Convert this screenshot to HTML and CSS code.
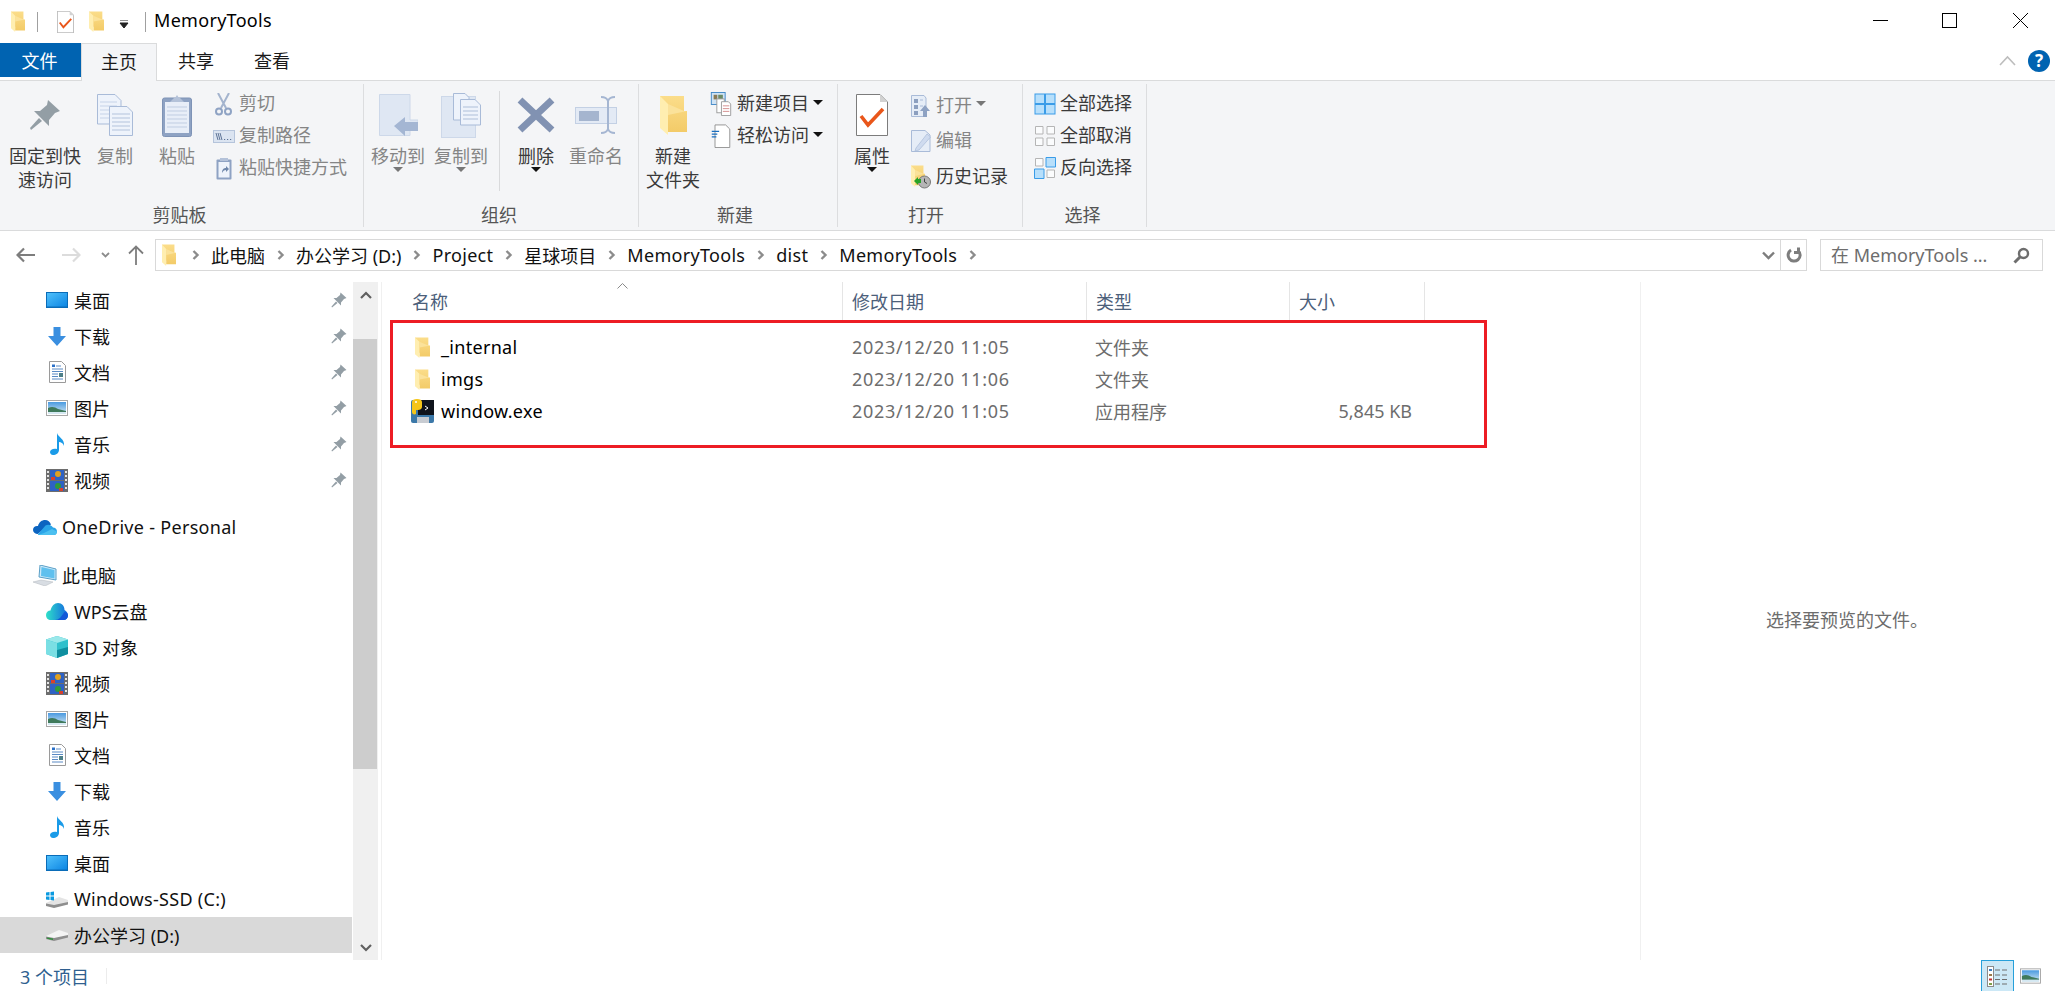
FILE: index.html
```html
<!DOCTYPE html>
<html lang="zh-CN">
<head>
    <meta charset="UTF-8">
    <title>MemoryTools</title>
    <link rel="stylesheet" href="styles.css">
</head>
<body>
    <!-- icon sprite -->
    <svg class="sprite" xmlns="http://www.w3.org/2000/svg">
        <defs>
            <linearGradient id="gFolder" x1="0" y1="0" x2="0" y2="1"><stop offset="0" stop-color="#fbdd8a"/><stop offset="1" stop-color="#f3cb68"/></linearGradient>
            <linearGradient id="gDesk" x1="0" y1="0" x2="1" y2="1"><stop offset="0" stop-color="#4fc0fb"/><stop offset="1" stop-color="#0d86e3"/></linearGradient>
            <linearGradient id="gSky" x1="0" y1="0" x2="0" y2="1"><stop offset="0" stop-color="#4a9ae0"/><stop offset="1" stop-color="#d5e8f2"/></linearGradient>
            <linearGradient id="gWps" x1="0" y1="0" x2="1" y2="0"><stop offset="0" stop-color="#2fe0c8"/><stop offset="1" stop-color="#1266e0"/></linearGradient>
        </defs>
        <symbol id="folder" viewBox="0 0 27 40" preserveAspectRatio="none">
            <path d="M0 1H24V16H27V37H8V30H0Z" fill="url(#gFolder)"/>
            <path d="M0 1L8 9V40L0 33Z" fill="#ffeeb0"/>
            <path d="M8 9L24 16H27L8 20Z" fill="#fbe29a"/>
        </symbol>
        <symbol id="pin" viewBox="0 0 32 32">
            <path d="M19 1L31 12L26 14L20 21L20 27L5 12L11 12L18 6Z" fill="#939ea5"/>
            <path d="M10 19L1 29L2 31L13 22Z" fill="#939ea5"/>
        </symbol>
        <symbol id="copy" viewBox="0 0 36 42">
            <path d="M.5.5H18L24 6.5V30H.5Z" fill="#eef3fb" stroke="#a9bbd8"/>
            <path d="M3 8H20M3 12H20M3 16H20M3 20H20M3 24H20" stroke="#c6d3e8"/>
            <path d="M12.5 12.5H30L35.5 18V41.5H12.5Z" fill="#eef3fb" stroke="#a9bbd8"/>
            <path d="M15 20H33M15 24H33M15 28H33M15 32H33M15 36H33" stroke="#b3c3dc"/>
        </symbol>
        <symbol id="paste" viewBox="0 0 30 43">
            <rect x=".5" y="4" width="29" height="38.5" rx="2" fill="#8ea2c3" stroke="#7e93b6"/>
            <rect x="3" y="8" width="24" height="31" fill="#e8eef8"/>
            <path d="M5 13H25M5 17H25M5 21H25M5 25H25M5 29H25M5 33H25" stroke="#c0cde2"/>
            <path d="M8 8L12 4H13L15 1L17 4H18L22 8Z" fill="#b4c2d9"/>
        </symbol>
        <symbol id="cut" viewBox="0 0 17 23">
            <path d="M3 0L11 15M14 0L6 15" stroke="#a4b4ce" stroke-width="2" fill="none"/>
            <circle cx="4" cy="18.5" r="3" fill="none" stroke="#8fa3c4" stroke-width="2"/>
            <circle cx="13" cy="18.5" r="3" fill="none" stroke="#8fa3c4" stroke-width="2"/>
        </symbol>
        <symbol id="copypath" viewBox="0 0 22 13">
            <rect x=".5" y=".5" width="21" height="12" fill="#dbe4f1" stroke="#b5c4db"/>
            <path d="M3 3L5 10M5 3L7 10M7 3L9 10M11 9.5H12.2M14 9.5H15.2M17 9.5H18.2" stroke="#5d7396" fill="none"/>
        </symbol>
        <symbol id="shortcut" viewBox="0 0 16 23">
            <rect x=".5" y="2.5" width="15" height="20" rx="1" fill="#8ea2c3"/>
            <rect x="2.5" y="5" width="11" height="15.5" fill="#eef3fb"/>
            <path d="M4 1H12V4H4Z" fill="#b4c2d9"/>
            <path d="M6 16C6 12 8 11 10 11V9L13 12L10 15V13C8 13 7 14 6 16Z" fill="#6e86aa"/>
        </symbol>
        <symbol id="move" viewBox="0 0 39 42">
            <path d="M.5.5H31V26H39V36H31V41.5H.5Z" fill="#dfe7f3" stroke="#cdd8e9"/>
            <path d="M15 32L26 23V28H39V37H26V42Z" fill="#a4b6d3"/>
        </symbol>
        <symbol id="copyto" viewBox="0 0 40 45">
            <rect x=".5" y="3.5" width="34" height="41" fill="#dfe7f3" stroke="#cdd8e9"/>
            <path d="M12.5.5H24L28 4.5V27H12.5Z" fill="#eef3fb" stroke="#a9bbd8"/>
            <path d="M19.5 6.5H34L39.5 12V32H19.5Z" fill="#eef3fb" stroke="#a9bbd8"/>
            <path d="M22 14H37M22 18H37M22 22H37M22 26H37" stroke="#aebfd9"/>
        </symbol>
        <symbol id="del" viewBox="0 0 38 36">
            <path d="M3 3L35 33M35 3L3 33" stroke="#8192b2" stroke-width="7"/>
        </symbol>
        <symbol id="rename" viewBox="0 0 42 38">
            <rect x=".5" y="11.5" width="41" height="16" fill="#e3eaf5" stroke="#c3d0e4"/>
            <rect x="4" y="15" width="20" height="10" fill="#a5b5cf"/>
            <path d="M26 1C30 1 32 2 33 5V33C32 36 30 37 26 37M40 1C36 1 34 2 33 5M33 33C34 36 36 37 40 37" stroke="#a5b6d2" stroke-width="2" fill="none"/>
        </symbol>
        <symbol id="newitem" viewBox="0 0 22 26">
            <rect x=".5" y=".5" width="15" height="13" fill="#cfe3f5" stroke="#3e86c6"/>
            <rect x="3" y="3" width="4" height="5" fill="#8a7a55"/>
            <rect x="8" y="3" width="5" height="5" fill="#6c8a66"/>
            <rect x="6.5" y="7.5" width="8" height="15" fill="#fff" stroke="#9a9a9a"/>
            <path d="M11.5 10.5H19L21.5 13V25.5H11.5Z" fill="#fff" stroke="#9a9a9a"/>
            <path d="M13 15H20M13 18H20M13 21H20" stroke="#d38a8a"/>
        </symbol>
        <symbol id="easy" viewBox="0 0 20 26">
            <path d="M3.5 1H15L19.5 5.5V25.5H3.5Z" fill="#fff" stroke="#8f8f8f"/>
            <path d="M0 8H8M0 11H6M0 14H5" stroke="#1a6fc0" stroke-width="1.4"/>
        </symbol>
        <symbol id="props" viewBox="0 0 32 42">
            <path d="M.5.5H24L31.5 8V41.5H.5Z" fill="#fff" stroke="#7c7c7c"/>
            <path d="M24 .5V8H31.5Z" fill="#d2d2d2"/>
            <path d="M5 22L12 31L27 15" fill="none" stroke="#e9561a" stroke-width="3.6"/>
        </symbol>
        <symbol id="open" viewBox="0 0 19 22">
            <path d="M.5.5H13L15 3V21.5H.5Z" fill="#e6edf7" stroke="#a9bbd8"/>
            <path d="M3 4H7V8H3ZM3 10H7V14H3ZM3 16H7V20H3Z" fill="#8c9fbf"/>
            <path d="M9 5H12M9 11H12" stroke="#a9bbd8"/>
            <path d="M14 10L19 16H16V22H12V16H9Z" fill="#8ea2c3"/>
        </symbol>
        <symbol id="edit" viewBox="0 0 20 22">
            <path d="M.5.5H14L19 5V21.5H.5Z" fill="#e6edf7" stroke="#a9bbd8"/>
            <path d="M5 18L16 4L19.5 7L8 20L4 21Z" fill="#cfdbef" stroke="#a9bbd8" stroke-width=".7"/>
        </symbol>
        <symbol id="history" viewBox="0 0 20 24">
            <use href="#folder" width="14" height="22"/>
            <circle cx="13.5" cy="17" r="6" fill="#b5b5b5" stroke="#777"/>
            <path d="M13.5 13.5V17L16 18.5" stroke="#444" fill="none"/>
            <path d="M3 16L7 12V14H10V18H7V20Z" fill="#27a327"/>
        </symbol>
        <symbol id="selall" viewBox="0 0 22 22">
            <rect x=".5" y=".5" width="21" height="21" fill="#3a9ce8"/>
            <path d="M1.5 1.5H10V10H1.5ZM12 1.5H20.5V10H12ZM1.5 12H10V20.5H1.5ZM12 12H20.5V20.5H12Z" fill="#b7dffb"/>
        </symbol>
        <symbol id="selnone" viewBox="0 0 22 22">
            <path d="M1.5 1.5H9V9H1.5ZM13 1.5H20.5V9H13ZM1.5 13H9V20.5H1.5ZM13 13H20.5V20.5H13Z" fill="#fbfcfd" stroke="#b5b5b5"/>
        </symbol>
        <symbol id="selinv" viewBox="0 0 22 22">
            <path d="M1.5 1.5H9V9H1.5ZM13 13H20.5V20.5H13Z" fill="#fbfcfd" stroke="#b5b5b5"/>
            <path d="M12 .5H21.5V10H12ZM.5 12H10V21.5H.5Z" fill="#b7dffb" stroke="#3a9ce8"/>
        </symbol>
        <symbol id="desktop" viewBox="0 0 22 16">
            <rect width="22" height="16" fill="#0a6cb8"/>
            <rect x="1" y="1" width="20" height="13.5" fill="url(#gDesk)"/>
        </symbol>
        <symbol id="download" viewBox="0 0 18 19">
            <path d="M5.500 0H12.500V9H18L9 19L0 9H5.500Z" fill="#3a8fe0"/>
        </symbol>
        <symbol id="doc" viewBox="0 0 17 22">
            <path d="M.5.5H12.5L16.5 4.5V21.5H.5Z" fill="#fff" stroke="#9a9a9a"/>
            <path d="M3 3.5H6V6H3Z" fill="#2a70c8"/>
            <path d="M7 5H12M3 8H14M3 10.5H14M3 13H9M3 15.5H9M3 18H14" stroke="#5a8ac4"/>
            <rect x="10" y="12" width="4" height="4" fill="#4d7f88"/>
        </symbol>
        <symbol id="picture" viewBox="0 0 22 16">
            <rect x=".5" y=".5" width="21" height="15" fill="#fff" stroke="#a8a8a8"/>
            <rect x="2" y="2" width="18" height="12" fill="url(#gSky)"/>
            <path d="M2 8C6 6 9 7 12 9L20 11V12H2Z" fill="#3f7a5c"/>
            <path d="M2 12H20V14H2Z" fill="#d5e8f2"/>
        </symbol>
        <symbol id="music" viewBox="0 0 15 22">
            <path d="M7 0C8 4 15 6 14 13C13 10 11 9 9 9V17C9 20 6 22 3 22C1 22 0 20.500 0 19C0 16.500 3.500 15 7 16Z" fill="#1a9be8"/>
        </symbol>
        <symbol id="video" viewBox="0 0 22 23">
            <rect width="22" height="23" fill="#6d6d6d"/>
            <path d="M1 2H3V4H1ZM1 6H3V8H1ZM1 10H3V12H1ZM1 14H3V16H1ZM1 18H3V20H1ZM19 2H21V4H19ZM19 6H21V8H19ZM19 10H21V12H19ZM19 14H21V16H19ZM19 18H21V20H19Z" fill="#e6e6e6"/>
            <rect x="4" y="1" width="14" height="10" fill="#2e62c4"/>
            <rect x="4" y="12" width="14" height="10" fill="#2e62c4"/>
            <circle cx="12" cy="5" r="3" fill="#e0a020"/>
            <circle cx="12" cy="17" r="3" fill="#2f9a3c"/>
            <path d="M5 8H9V11H5ZM13 19H17V22H13Z" fill="#d8402c"/>
        </symbol>
        <symbol id="onedrive" viewBox="0 0 24 16">
            <path d="M5 15C2 15 0 13 0 11C0 8 2.500 6.500 5 7C6 3 9 1 12 1C15 1 17 3 18 5.500L12 9L6 14Z" fill="#0c64c0"/>
            <path d="M5 16H21C23 16 24 14 24 12.500C24 10 22 8.500 20 8.500C18 5.500 15 5 12.500 6.500L7 13C6 14 5 15 5 16Z" fill="#2ba5e8"/>
            <path d="M5 16H21C22.500 16 24 15 24 12.500L19 10L11 14Z" fill="#4cc0f0"/>
        </symbol>
        <symbol id="pc" viewBox="0 0 24 21">
            <path d="M7 0L23 4V15L6 12Z" fill="#cdeafa" stroke="#5a9fc6"/>
            <path d="M8.500 2L21.500 5V13.500L8 11Z" fill="#5fc0ee"/>
            <path d="M0 17L8 15L20 17L12 21Z" fill="#d8dde3" stroke="#b0b6bd" stroke-width=".5"/>
        </symbol>
        <symbol id="wps" viewBox="0 0 22 17">
            <path d="M5 17C2 17 0 15 0 12C0 9.500 2 7.500 4.500 7.500C5.500 3 8.500 0 12 0C16 0 18.500 3 18.500 7C20.500 8 22 10 22 12.500C22 15 20 17 17.500 17Z" fill="url(#gWps)"/>
            <path d="M9 17C13 17 15 14 18.500 9C20.500 9 22 10.500 22 12.500C22 15 20 17 17.500 17Z" fill="#1258d8"/>
        </symbol>
        <symbol id="cube" viewBox="0 0 22 22">
            <path d="M11 0L22 3.500V18L11 22L0 18V3.500Z" fill="#2fc0cc"/>
            <path d="M11 0L22 3.500L11 7L0 3.500Z" fill="#9ae8ea"/>
            <path d="M0 3.500L11 7V22L0 18Z" fill="#7adfe4"/>
            <path d="M11 14L22 11V18L11 22Z" fill="#0f8fa0"/>
        </symbol>
        <symbol id="drive" viewBox="0 0 22 11">
            <path d="M0 6L13 0L22 3V6L8 9L0 7Z" fill="#f4f4f4"/>
            <path d="M0 6.500L8 8L22 5V7.500L8 11L0 9Z" fill="#8e8e8e"/>
            <path d="M1 7.500L7 8.500V10L1 8.800Z" fill="#2f8f3c"/>
        </symbol>
        <symbol id="drivewin" viewBox="0 0 22 17">
            <path d="M0 12L13 6L22 9V12L8 15L0 13Z" fill="#e4e4e4"/>
            <path d="M0 12.500L8 14L22 11V13.500L8 17L0 15Z" fill="#8e8e8e"/>
            <path d="M0 1.500L3.500 1V4.500H0ZM4.500 1L8 .5V4.500H4.500ZM0 5.500H3.500V9L0 8.500ZM4.500 5.500H8V9.500L4.500 9Z" fill="#0a9ae0"/>
        </symbol>
        <symbol id="exe" viewBox="0 0 23 24">
            <rect y="1" width="23" height="23" rx="2" fill="#3b78a8"/>
            <rect x="7" y="1" width="16" height="15" fill="#10141c"/>
            <path d="M1 3C1 1 3 0 6 0C9 0 11 1 11 3V8C11 10 9 11 7 11H5V15C3 16 1 15 1 13Z" fill="#f5c518"/>
            <circle cx="5" cy="3" r="1" fill="#fff"/>
            <path d="M14 7L17 9L14 11" stroke="#fff" fill="none"/>
            <rect x="6" y="18" width="12" height="6" fill="#c8ccd2"/>
        </symbol>
        <symbol id="chev" viewBox="0 0 8 10">
            <path d="M1.500 1L5.500 5L1.500 9" stroke="#8c8c8c" stroke-width="2.400" fill="none"/>
        </symbol>
    </svg>

    <div class="titlebar">
        <svg class="qa-folder" width="14" height="21"><use href="#folder"/></svg>
        <span class="qa-sep"></span>
        <svg class="qa-props" width="17" height="22"><use href="#props"/></svg>
        <svg class="qa-folder2" width="15" height="21"><use href="#folder"/></svg>
        <svg class="qa-more" width="10" height="9" viewBox="0 0 10 9"><path d="M1 0H9M1 3H9L5 8Z" stroke="#222" fill="#222" stroke-width="1"/></svg>
        <span class="qa-sep qa-sep-last"></span>
        <span class="title lat">MemoryTools</span>
        <div class="winbtns">
            <svg class="win-min" width="15" height="15" viewBox="0 0 15 15"><path d="M0 7.500H15" stroke="#000"/></svg>
            <svg class="win-max" width="15" height="15" viewBox="0 0 15 15"><rect x=".5" y=".5" width="14" height="14" fill="none" stroke="#000"/></svg>
            <svg class="win-close" width="15" height="15" viewBox="0 0 15 15"><path d="M0 0L15 15M15 0L0 15" stroke="#000"/></svg>
        </div>
    </div>

    <div class="tabs">
        <div class="tab tab-file">文件</div>
        <div class="tab tab-active">主页</div>
        <div class="tab tab-share">共享</div>
        <div class="tab tab-view">查看</div>
        <svg class="collapse" width="17" height="11" viewBox="0 0 17 11"><path d="M1 10L8.500 2L16 10" stroke="#bdbdbd" stroke-width="1.600" fill="none"/></svg>
        <div class="help">?</div>
    </div>

    <div class="ribbon">
        <div class="group group-clip">
            <div class="tools">
                <div class="big w74">
                    <div class="big-icon"><svg width="32" height="32"><use href="#pin"/></svg></div>
                    <span>固定到快<br>速访问</span>
                </div>
                <div class="big w66 off">
                    <div class="big-icon"><svg width="36" height="42"><use href="#copy"/></svg></div>
                    <span>复制</span>
                </div>
                <div class="big w58 off">
                    <div class="big-icon"><svg width="30" height="43"><use href="#paste"/></svg></div>
                    <span>粘贴</span>
                </div>
                <div class="smalls smalls-clip">
                    <div class="small off"><div class="small-icon"><svg width="17" height="23"><use href="#cut"/></svg></div>剪切</div>
                    <div class="small off"><div class="small-icon"><svg width="22" height="13"><use href="#copypath"/></svg></div>复制路径</div>
                    <div class="small off"><div class="small-icon"><svg width="16" height="23"><use href="#shortcut"/></svg></div>粘贴快捷方式</div>
                </div>
            </div>
            <div class="group-label">剪贴板</div>
        </div>

        <div class="group group-org">
            <div class="tools">
                <div class="big w60 off">
                    <div class="big-icon"><svg width="39" height="42"><use href="#move"/></svg></div>
                    <span>移动到</span><i class="drop"></i>
                </div>
                <div class="big w66 off">
                    <div class="big-icon"><svg width="40" height="45"><use href="#copyto"/></svg></div>
                    <span>复制到</span><i class="drop"></i>
                </div>
                <div class="tool-sep"></div>
                <div class="big w62">
                    <div class="big-icon"><svg width="38" height="36"><use href="#del"/></svg></div>
                    <span>删除</span><i class="drop"></i>
                </div>
                <div class="big w58 off">
                    <div class="big-icon"><svg width="42" height="38"><use href="#rename"/></svg></div>
                    <span>重命名</span>
                </div>
            </div>
            <div class="group-label">组织</div>
        </div>

        <div class="group group-new">
            <div class="tools">
                <div class="big w60">
                    <div class="big-icon"><svg width="27" height="40"><use href="#folder"/></svg></div>
                    <span>新建<br>文件夹</span>
                </div>
                <div class="smalls smalls-new">
                    <div class="small"><div class="small-icon"><svg width="22" height="24"><use href="#newitem"/></svg></div>新建项目<i class="drop drop-side"></i></div>
                    <div class="small"><div class="small-icon"><svg width="20" height="24"><use href="#easy"/></svg></div>轻松访问<i class="drop drop-side"></i></div>
                </div>
            </div>
            <div class="group-label">新建</div>
        </div>

        <div class="group group-open">
            <div class="tools">
                <div class="big w60">
                    <div class="big-icon"><svg width="32" height="42"><use href="#props"/></svg></div>
                    <span>属性</span><i class="drop"></i>
                </div>
                <div class="smalls smalls-open">
                    <div class="small off"><div class="small-icon"><svg width="19" height="22"><use href="#open"/></svg></div>打开<i class="drop drop-side"></i></div>
                    <div class="small off"><div class="small-icon"><svg width="20" height="22"><use href="#edit"/></svg></div>编辑</div>
                    <div class="small"><div class="small-icon"><svg width="20" height="24"><use href="#history"/></svg></div>历史记录</div>
                </div>
            </div>
            <div class="group-label">打开</div>
        </div>

        <div class="group group-sel">
            <div class="tools">
                <div class="smalls smalls-sel">
                    <div class="small"><div class="small-icon"><svg width="22" height="22"><use href="#selall"/></svg></div>全部选择</div>
                    <div class="small"><div class="small-icon"><svg width="22" height="22"><use href="#selnone"/></svg></div>全部取消</div>
                    <div class="small"><div class="small-icon"><svg width="22" height="22"><use href="#selinv"/></svg></div>反向选择</div>
                </div>
            </div>
            <div class="group-label">选择</div>
        </div>
    </div>

    <div class="addressbar">
        <div class="navbtns">
            <svg class="nb-back" width="19" height="16" viewBox="0 0 19 16"><path d="M19 8H2M8 1.500L1.500 8L8 14.500" stroke="#7d7d7d" stroke-width="2.200" fill="none"/></svg>
            <svg class="nb-fwd" width="19" height="16" viewBox="0 0 19 16"><path d="M0 8H17M11 1.500L17.500 8L11 14.500" stroke="#dcdcdc" stroke-width="2.200" fill="none"/></svg>
            <svg class="nb-recent" width="9" height="6" viewBox="0 0 9 6"><path d="M1 1L4.500 4.500L8 1" stroke="#8c8c8c" stroke-width="1.800" fill="none"/></svg>
            <svg class="nb-up" width="16" height="20" viewBox="0 0 16 20"><path d="M8 20V2M1 8.500L8 1.500L15 8.500" stroke="#7d7d7d" stroke-width="1.800" fill="none"/></svg>
        </div>
        <div class="pathbox">
            <svg class="path-folder" width="14" height="22"><use href="#folder"/></svg>
            <svg class="crumb-chev" width="8" height="10"><use href="#chev"/></svg>
            <span>此电脑</span>
            <svg class="crumb-chev" width="8" height="10"><use href="#chev"/></svg>
            <span>办公学习 (D:)</span>
            <svg class="crumb-chev" width="8" height="10"><use href="#chev"/></svg>
            <span class="lat">Project</span>
            <svg class="crumb-chev" width="8" height="10"><use href="#chev"/></svg>
            <span>星球项目</span>
            <svg class="crumb-chev" width="8" height="10"><use href="#chev"/></svg>
            <span class="lat">MemoryTools</span>
            <svg class="crumb-chev" width="8" height="10"><use href="#chev"/></svg>
            <span class="lat">dist</span>
            <svg class="crumb-chev" width="8" height="10"><use href="#chev"/></svg>
            <span class="lat">MemoryTools</span>
            <svg class="crumb-chev" width="8" height="10"><use href="#chev"/></svg>
            <svg class="path-drop" width="13" height="9" viewBox="0 0 13 9"><path d="M1 1.500L6.500 7L12 1.500" stroke="#7d7d7d" stroke-width="2.400" fill="none"/></svg>
            <div class="path-refresh">
                <svg width="16" height="16" viewBox="0 0 16 16"><path d="M5 2.500A6 6 0 1 0 12.500 3.500M12.500 0V5H8" stroke="#7d7d7d" stroke-width="3" fill="none" transform="translate(0 .5)"/></svg>
            </div>
        </div>
        <div class="searchbox">
            <span class="search-text">在 MemoryTools ...</span>
            <svg width="17" height="17" viewBox="0 0 17 17"><circle cx="10.500" cy="6.500" r="4.500" fill="none" stroke="#6e6e6e" stroke-width="2.400"/><path d="M7 10L1.500 15.500" stroke="#6e6e6e" stroke-width="3"/></svg>
        </div>
    </div>

    <div class="content">
        <div class="navpane">
            <div class="navrow"><div class="nav-icon"><svg width="22" height="16"><use href="#desktop"/></svg></div>桌面<svg class="nav-pin" width="16" height="16"><use href="#pin"/></svg></div>
            <div class="navrow"><div class="nav-icon"><svg width="18" height="19"><use href="#download"/></svg></div>下载<svg class="nav-pin" width="16" height="16"><use href="#pin"/></svg></div>
            <div class="navrow"><div class="nav-icon"><svg width="17" height="22"><use href="#doc"/></svg></div>文档<svg class="nav-pin" width="16" height="16"><use href="#pin"/></svg></div>
            <div class="navrow"><div class="nav-icon"><svg width="22" height="16"><use href="#picture"/></svg></div>图片<svg class="nav-pin" width="16" height="16"><use href="#pin"/></svg></div>
            <div class="navrow"><div class="nav-icon"><svg width="17" height="22"><use href="#music"/></svg></div>音乐<svg class="nav-pin" width="16" height="16"><use href="#pin"/></svg></div>
            <div class="navrow"><div class="nav-icon"><svg width="22" height="23"><use href="#video"/></svg></div>视频<svg class="nav-pin" width="16" height="16"><use href="#pin"/></svg></div>

            <div class="navrow top top-onedrive lat"><div class="nav-icon"><svg width="24" height="16"><use href="#onedrive"/></svg></div>OneDrive - Personal</div>
            <div class="navrow top top-pc"><div class="nav-icon"><svg width="24" height="21"><use href="#pc"/></svg></div>此电脑</div>

            <div class="navrow"><div class="nav-icon"><svg width="22" height="17"><use href="#wps"/></svg></div>WPS云盘</div>
            <div class="navrow"><div class="nav-icon"><svg width="22" height="22"><use href="#cube"/></svg></div>3D 对象</div>
            <div class="navrow"><div class="nav-icon"><svg width="22" height="23"><use href="#video"/></svg></div>视频</div>
            <div class="navrow"><div class="nav-icon"><svg width="22" height="16"><use href="#picture"/></svg></div>图片</div>
            <div class="navrow"><div class="nav-icon"><svg width="17" height="22"><use href="#doc"/></svg></div>文档</div>
            <div class="navrow"><div class="nav-icon"><svg width="18" height="19"><use href="#download"/></svg></div>下载</div>
            <div class="navrow"><div class="nav-icon"><svg width="17" height="22"><use href="#music"/></svg></div>音乐</div>
            <div class="navrow"><div class="nav-icon"><svg width="22" height="16"><use href="#desktop"/></svg></div>桌面</div>
            <div class="navrow lat"><div class="nav-icon"><svg width="22" height="17"><use href="#drivewin"/></svg></div>Windows-SSD (C:)</div>
            <div class="navrow selected"><div class="nav-icon"><svg width="22" height="11"><use href="#drive"/></svg></div>办公学习 (D:)</div>
        </div>

        <div class="scrollbar">
            <div class="sb-btn"><svg width="12" height="8" viewBox="0 0 12 8"><path d="M1 7L6 2L11 7" stroke="#606060" stroke-width="2.200" fill="none"/></svg></div>
            <div class="sb-thumb"></div>
            <div class="sb-rest"></div>
            <div class="sb-btn"><svg width="12" height="8" viewBox="0 0 12 8"><path d="M1 1L6 6L11 1" stroke="#606060" stroke-width="2.200" fill="none"/></svg></div>
        </div>

        <div class="filelist">
            <svg class="sort-arrow" width="11" height="6" viewBox="0 0 11 6"><path d="M.5 5.500L5.500 .5L10.500 5.500" stroke="#8a8a8a" fill="none"/></svg>
            <div class="cols header">
                <div class="hcell hcell-name">名称</div>
                <div class="hcell">修改日期</div>
                <div class="hcell">类型</div>
                <div class="hcell">大小</div>
            </div>
            <div class="rows">
                <div class="cols row">
                    <div class="name lat"><div class="file-icon"><svg width="15" height="21"><use href="#folder"/></svg></div>_internal</div>
                    <div class="date">2023/12/20 11:05</div>
                    <div class="type">文件夹</div>
                    <div class="size"></div>
                </div>
                <div class="cols row">
                    <div class="name lat"><div class="file-icon"><svg width="15" height="21"><use href="#folder"/></svg></div>imgs</div>
                    <div class="date">2023/12/20 11:06</div>
                    <div class="type">文件夹</div>
                    <div class="size"></div>
                </div>
                <div class="cols row">
                    <div class="name lat"><div class="file-icon"><svg width="23" height="24"><use href="#exe"/></svg></div>window.exe</div>
                    <div class="date">2023/12/20 11:05</div>
                    <div class="type">应用程序</div>
                    <div class="size">5,845 KB</div>
                </div>
            </div>
            <!-- red box drawn over the screenshot -->
            <div class="highlight"></div>
        </div>

        <div class="preview">选择要预览的文件。</div>
    </div>

    <div class="statusbar">
        <span class="count">3 个项目</span>
        <span class="status-sep"></span>
        <div class="viewbtns">
            <div class="view-details">
                <svg width="21" height="21" viewBox="0 0 21 21">
                    <rect x=".5" y=".5" width="6" height="20" fill="#fff" stroke="#8a8a8a"/>
                    <path d="M2 3H5V5H2Z" fill="#3f7fc0"/><path d="M2 8H5V10H2Z" fill="#9a7a4a"/><path d="M2 12.500H5V14.500H2Z" fill="#c03030"/><path d="M2 17H5V19H2Z" fill="#7f9f4a"/>
                    <path d="M8 4H13M15 4H20M8 9H13M15 9H20M8 13.500H13M15 13.500H20M8 18H13M15 18H20" stroke="#6e6e6e"/>
                </svg>
            </div>
            <svg width="21" height="16"><use href="#picture"/></svg>
        </div>
    </div>
</body>
</html>
```

FILE: styles.css
```css
/* Explorer window */
html, body {
    margin: 0;
    padding: 0;
    background-color: #fff;
}

body {
    width: 2057px;
    height: 991px;
    overflow: hidden;
    font-family: "Noto Sans", "Noto Sans CJK SC", sans-serif;
    font-size: 18px;
    color: #1a1a1a;
}

svg {
    display: block;
    flex: none;
}

.sprite {
    width: 0;
    height: 0;
}

/* latin strings run a bit wider than Noto in the original */
.lat {
    letter-spacing: .3px;
}

/* title bar */
.titlebar {
    height: 43px;
    display: flex;
    align-items: center;
    padding-left: 11px;
}

.qa-sep {
    width: 1px;
    height: 20px;
    background-color: #a0a0a0;
    margin-left: 12px;
}

.qa-props {
    margin-left: 19px;
}

.qa-folder2 {
    margin-left: 15px;
}

.qa-more {
    margin-left: 15px;
    margin-top: 6px;
}

.qa-sep-last {
    margin-left: 16px;
}

.title {
    margin-left: 8px;
    color: #000;
    margin-top: -3px;
}

.winbtns {
    margin-left: auto;
    display: flex;
    padding-right: 29px;
    margin-top: -2px;
}

.win-max {
    margin-left: 54px;
}

.win-close {
    margin-left: 56px;
}

/* tabs */
.tabs {
    height: 37px;
    display: flex;
    align-items: flex-start;
    position: relative;
    z-index: 1;
}

.tab {
    height: 34px;
    line-height: 36px;
    text-align: center;
}

.tab-file {
    width: 79px;
    padding-right: 2px;
    background-color: #0063b1;
    color: #fff;
}

.tab-active {
    width: 74px;
    height: 37px;
    background-color: #f4f5f7;
    border: 1px solid #dadbdc;
    border-bottom: none;
}

.tab-share {
    width: 78px;
}

.tab-view {
    width: 74px;
}

.collapse {
    margin-left: auto;
    margin-top: 12px;
}

.help {
    width: 22px;
    height: 22px;
    border-radius: 50%;
    background-color: #0063b1;
    color: #fff;
    font-size: 17px;
    font-weight: bold;
    line-height: 22px;
    text-align: center;
    margin: 7px 7px 0 12px;
}

/* ribbon */
.ribbon {
    height: 143px;
    padding: 3px 0;
    margin-right: 2px;
    display: flex;
    background-color: #f4f5f7;
    border-top: 1px solid #dadbdc;
    border-bottom: 1px solid #dadbdc;
}

.group {
    display: flex;
    flex-direction: column;
    border-right: 1px solid #dcdddf;
    box-sizing: border-box;
}

.group-clip { width: 364px; }
.group-org { width: 275px; }
.group-new { width: 199px; }
.group-open { width: 185px; }
.group-sel { width: 124px; }

.tools {
    height: 119px;
    display: flex;
    color: #3a3a3a;
}

.group-clip .tools { padding-left: 8px; }
.group-org .tools { padding-left: 4px; }
.group-new .tools { padding-left: 4px; }
.group-open .tools { padding-left: 4px; }
.group-sel .tools { padding-left: 9px; }

.group-label {
    height: 24px;
    line-height: 24px;
    text-align: center;
    color: #555;
    padding-right: 4px;
}

.group-new .group-label { padding-right: 6px; }
.group-open .group-label { padding-right: 8px; }

.big {
    display: flex;
    flex-direction: column;
    align-items: center;
    text-align: center;
    line-height: 24px;
}

.w58 { width: 58px; }
.w60 { width: 60px; }
.w62 { width: 62px; }
.w66 { width: 66px; }
.w74 { width: 74px; }

.big-icon {
    height: 60px;
    box-sizing: border-box;
    padding-top: 2px;
    display: flex;
    align-items: center;
    justify-content: center;
}

.off {
    color: #858585;
}

.drop {
    display: block;
    width: 0;
    height: 0;
    margin-top: -1px;
    border-left: 5px solid transparent;
    border-right: 5px solid transparent;
    border-top: 5px solid #111;
}

.off .drop {
    border-top-color: #777;
}

.drop-side {
    margin: 0 0 0 4px;
}

.tool-sep {
    width: 1px;
    height: 100px;
    margin: 7px 5px 0;
    background-color: #d9dadc;
}

.smalls {
    padding-top: 2px;
}

.small {
    height: 32px;
    display: flex;
    align-items: center;
}

.small-icon {
    width: 25px;
    margin: 4px 3px 0 0;
    display: flex;
    justify-content: center;
}

.smalls-clip { margin-left: 5px; }
.smalls-new { margin-left: 5px; }
.smalls-new .small-icon { margin-right: 4px; }
.smalls-open { margin-left: 6px; }
.smalls-open .small { height: 35.5px; }

/* address bar */
.addressbar {
    height: 43px;
    padding-top: 8px;
    margin-right: 14px;
    display: flex;
    align-items: flex-start;
}

.navbtns {
    width: 155px;
    height: 32px;
    display: flex;
    align-items: center;
    padding-left: 16px;
    box-sizing: border-box;
}

.nb-fwd { margin-left: 27px; }
.nb-recent { margin-left: 20px; }
.nb-up { margin-left: 18px; }

.pathbox {
    width: 1652px;
    height: 32px;
    box-sizing: border-box;
    border: 1px solid #d9d9d9;
    display: flex;
    align-items: center;
    padding-left: 6px;
    color: #111;
}

.crumb-chev {
    margin: 0 11px 0 12px;
}

.path-folder + .crumb-chev {
    margin-left: 16px;
}

.path-drop {
    margin-left: auto;
}

.path-refresh {
    width: 25px;
    height: 30px;
    margin-left: 5px;
    border-left: 1px solid #d9d9d9;
    display: flex;
    align-items: center;
    justify-content: center;
}

.searchbox {
    width: 223px;
    height: 32px;
    margin-left: 13px;
    box-sizing: border-box;
    border: 1px solid #d9d9d9;
    display: flex;
    align-items: center;
    justify-content: space-between;
    padding: 0 12px 0 10px;
    color: #6d6d6d;
}

.search-text {
    margin-top: -2px;
}

/* main area */
.content {
    height: 678px;
    display: flex;
}

.navpane {
    width: 352px;
    flex: none;
}

.navrow {
    height: 36px;
    display: flex;
    align-items: center;
    padding-left: 46px;
    color: #111;
}

.nav-icon {
    width: 22px;
    margin-right: 6px;
    display: flex;
    justify-content: center;
}

.nav-pin {
    margin-left: auto;
    margin-right: 5px;
}

.navrow.top {
    padding-left: 33px;
}

.top .nav-icon {
    width: 24px;
    margin-right: 5px;
}

.top-onedrive {
    margin-top: 11px;
}

.top-pc {
    margin-top: 12px;
}

.selected {
    background-color: #d9d9d9;
}

.scrollbar {
    width: 25px;
    margin-left: 1px;
    flex: none;
    display: flex;
    flex-direction: column;
    background-color: #f0f0f0;
}

.sb-btn {
    height: 25px;
    display: flex;
    align-items: center;
    justify-content: center;
    flex: none;
}

.sb-thumb {
    height: 430px;
    width: 24px;
    margin-top: 32px;
    background-color: #cdcdcd;
}

.sb-rest {
    flex: 1;
}

.filelist {
    width: 1259px;
    flex: none;
    margin-left: 3px;
    border-left: 1px solid #f0f0f0;
    box-sizing: border-box;
    position: relative;
}

.cols {
    display: grid;
    grid-template-columns: 461px 244px 203px 135px;
}

.header {
    height: 38px;
    color: #4c607a;
}

.hcell {
    padding-left: 9px;
    line-height: 40px;
    border-right: 1px solid #e5e5e5;
}

.hcell-name {
    padding-left: 30px;
}

.sort-arrow {
    position: absolute;
    left: 235px;
    top: 1px;
}

.rows {
    padding-top: 11px;
}

.row {
    height: 32px;
    align-items: center;
    color: #6d6d6d;
}

.name {
    display: flex;
    align-items: center;
    padding-left: 29px;
    color: #000;
}

.file-icon {
    width: 23px;
    margin-right: 7px;
    display: flex;
    justify-content: center;
}

.date {
    padding-left: 9px;
    letter-spacing: .7px;
}

.type {
    padding-left: 8px;
}

.size {
    text-align: right;
    padding-right: 13px;
}

.highlight {
    position: absolute;
    left: 8px;
    top: 38px;
    width: 1097px;
    height: 128px;
    box-sizing: border-box;
    border: 3px solid #ed1c24;
}

.preview {
    flex: 1;
    display: flex;
    align-items: center;
    justify-content: center;
    padding: 0 4px 4px 0;
    border-left: 1px solid #f0f0f0;
    color: #6d6d6d;
}

/* status bar */
.statusbar {
    height: 31px;
    display: flex;
    align-items: center;
    padding-left: 20px;
    color: #2f5f8f;
}

.status-sep {
    width: 1px;
    height: 16px;
    margin-left: 17px;
    background-color: #ececec;
}

.viewbtns {
    margin-left: auto;
    height: 31px;
    display: flex;
    align-items: center;
    padding-right: 16px;
}

.view-details {
    width: 33px;
    height: 31px;
    box-sizing: border-box;
    margin-right: 6px;
    background-color: #cce8f6;
    border: 1px solid #26a0da;
    border-bottom: none;
    display: flex;
    align-items: center;
    justify-content: center;
}
```
